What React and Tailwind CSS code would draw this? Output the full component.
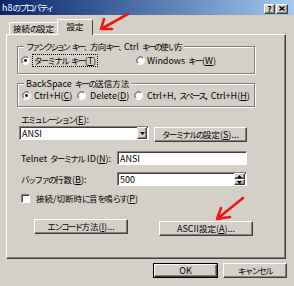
import React from 'react';

const raised = 'border border-t-white border-l-white border-r-[#404040] border-b-[#404040] shadow-[inset_-1px_-1px_0_#808080]';
const sunken = 'border border-t-[#808080] border-l-[#808080] border-r-white border-b-white shadow-[inset_1px_1px_0_#404040]';

// MS UI Gothic draws kana narrow; tighten kana / kanji runs to match
const J = ({ children, tight }) => {
  const parts = String(children).split(/([ァィゥェォャュョッ、]|[\u3000-\u30ff]+|[\u4e00-\u9fff]+)/).filter(Boolean);
  return parts.map((p, i) => {
    if (/^[ァィゥェォャュョッ、]$/.test(p)) return <span key={i} className="text-[8.5px] tracking-[-3.5px]">{p}</span>;
    if (/[\u3000-\u30ff]/.test(p)) return <span key={i} className={`text-[8.5px] ${tight ? 'tracking-[-2.4px]' : 'tracking-[-1.7px]'}`}>{p}</span>;
    if (/[\u4e00-\u9fff]/.test(p)) return <span key={i} className={`text-[8.5px] ${tight ? 'tracking-[-0.6px]' : ''}`}>{p}</span>;
    return p;
  });
};

const Radio = ({ checked }) => (
  <svg width="9" height="9" viewBox="0 0 12 12" className="shrink-0">
    <circle cx="6" cy="6" r="5.5" fill="#fff" />
    <path d="M2.1 9.9 A5.5 5.5 0 0 1 9.9 2.1" stroke="#808080" strokeWidth="1" fill="none" />
    <path d="M2.8 9.2 A4.5 4.5 0 0 1 9.2 2.8" stroke="#404040" strokeWidth="1" fill="none" />
    <path d="M9.9 2.1 A5.5 5.5 0 0 1 2.1 9.9" stroke="#fff" strokeWidth="1" fill="none" />
    {checked && <circle cx="6" cy="6" r="1.9" fill="#000" />}
  </svg>
);

const Key = ({ k }) => (
  <>(<span className="underline">{k}</span>)</>
);

const Button = ({ children, className = '' }) => (
  <div className={`${raised} bg-[#d4d0c8] flex items-center justify-center ${className}`}>
    {children}
  </div>
);

const Group = ({ label, className = '', children }) => (
  <div className={`relative border border-[#808080] shadow-[inset_1px_1px_0_#fff,1px_1px_0_#fff] ${className}`}>
    <span className="absolute -top-[6px] left-[6px] px-[2px] bg-[#d4d0c8] leading-[11px]">{label}</span>
    {children}
  </div>
);

const Arrow = ({ d }) => (
  <svg className="absolute top-0 left-0 pointer-events-none" width="294" height="286" viewBox="0 0 294 286">
    <path d={d} stroke="#f01414" strokeWidth="2.6" strokeLinecap="round" strokeLinejoin="round" fill="none" />
  </svg>
);

export default function App() {
  return (
    <div className="w-[294px] h-[286px] bg-[#d4d0c8] relative overflow-hidden whitespace-nowrap text-black text-[9px] leading-none [word-spacing:1px] font-['Noto_Sans_CJK_JP','Noto_Sans',sans-serif]">
      {/* Title bar */}
      <div className="h-[15px] bg-gradient-to-r from-[#0a246a] to-[#a6caf0] flex items-center justify-between pl-[2px] pr-[6px]">
        <span className="text-white text-[9px]"><J>h8のプロパティ</J></span>
        <div className="flex gap-[1px] mt-[2px]">
          <Button className="w-[11px] h-[10px] text-[8px] font-bold">?</Button>
          <Button className="w-[12px] h-[10px]">
            <svg width="6" height="5" viewBox="0 0 6 5">
              <path d="M0.5 0.5 L5.5 4.5 M5.5 0.5 L0.5 4.5" stroke="#000" strokeWidth="1.4" />
            </svg>
          </Button>
        </div>
      </div>

      {/* Tabs + panel */}
      <div className="ml-[6px] w-[280px] pt-[4px]">
        <div className="flex items-end h-[15px] pl-[3px]">
          <div className="w-[49px] h-[12px] border border-b-0 border-t-white border-l-white border-r-[#404040] rounded-t-[2px] flex items-center justify-center">
            <J>接続の設定</J>
          </div>
          <div className="relative z-10 -ml-[1px] -mb-[1px] w-[36px] h-[16px] bg-[#d4d0c8] border border-b-0 border-t-white border-l-white border-r-[#404040] rounded-t-[2px] flex items-center justify-center pb-[2px]">
            <J>設定</J>
          </div>
        </div>

        <div className={`${raised} h-[225px] pl-[10px] pt-[11px]`}>
          <Group label={<J tight>ファンクション キー、方向キー、Ctrl キーの使い方</J>} className="w-[238px] h-[28px] flex items-center pl-[3px]">
            <div className="flex items-center w-[115px]">
              <Radio checked />
              <span className="ml-[2px] px-[1px] py-[1px] border border-dotted border-black"><J>ターミナル キー</J><Key k="T" /></span>
            </div>
            <div className="flex items-center">
              <Radio />
              <span className="ml-[2px]"><J>Windows キー</J><Key k="W" /></span>
            </div>
          </Group>

          <Group label={<J>BackSpace キーの送信方法</J>} className="mt-[9px] w-[238px] h-[24px] flex items-center pl-[4px]">
            <div className="flex items-center w-[55px]">
              <Radio checked />
              <span className="ml-[3px]">Ctrl+H<Key k="C" /></span>
            </div>
            <div className="flex items-center w-[57px]">
              <Radio />
              <span className="ml-[4px]">Delete<Key k="D" /></span>
            </div>
            <div className="flex items-center">
              <Radio />
              <span className="ml-[4px]"><J>Ctrl+H, スペース, Ctrl+H</J><Key k="H" /></span>
            </div>
          </Group>

          <div className="mt-[7px] pl-[4px] h-[11px] leading-[11px]"><J>エミュレーション</J><Key k="E" />:</div>

          <div className="flex items-start mt-[1px] pl-[2px]">
            <div className={`${sunken} bg-white w-[130px] h-[14px] flex items-center justify-between`}>
              <span className="pl-[2px]">ANSI</span>
              <Button className="w-[10px] h-[12px] mr-[1px]">
                <svg width="5" height="3" viewBox="0 0 5 3"><path d="M0 0 H5 L2.5 3 Z" fill="#000" /></svg>
              </Button>
            </div>
            <Button className="ml-[5px] mt-[1px] w-[93px] h-[15px]"><J>ターミナルの設定</J><Key k="S" />...</Button>
          </div>

          <div className="flex items-center mt-[9px] pl-[4px]">
            <span className="w-[96px]"><J>Telnet ターミナル ID</J><Key k="N" />:</span>
            <div className={`${sunken} bg-white w-[130px] h-[14px] flex items-center pl-[2px]`}>ANSI</div>
          </div>

          <div className="flex items-center mt-[7px] pl-[4px]">
            <span className="w-[96px]"><J>バッファの行数</J><Key k="B" />:</span>
            <div className={`${sunken} bg-white w-[130px] h-[14px] flex items-center justify-between pl-[2px]`}>
              <span>500</span>
              <div className="flex flex-col mr-[1px]">
                <Button className="w-[11px] h-[6px]">
                  <svg width="5" height="3" viewBox="0 0 5 3"><path d="M0 3 H5 L2.5 0 Z" fill="#000" /></svg>
                </Button>
                <Button className="w-[11px] h-[6px]">
                  <svg width="5" height="3" viewBox="0 0 5 3"><path d="M0 0 H5 L2.5 3 Z" fill="#000" /></svg>
                </Button>
              </div>
            </div>
          </div>

          <div className="flex items-center mt-[8px] pl-[4px]">
            <div className={`${sunken} bg-white w-[9px] h-[9px]`} />
            <span className="ml-[6px]"><J>接続/切断時に音を鳴らす</J><Key k="P" /></span>
          </div>

          <div className="flex items-start mt-[16px] pl-[17px]">
            <Button className="w-[94px] h-[15px]"><J>エンコード方法</J><Key k="I" />...</Button>
            <Button className="ml-[31px] mt-[2px] w-[94px] h-[15px]"><J>ASCII 設定</J><Key k="A" />...</Button>
          </div>
        </div>
      </div>

      {/* Dialog buttons */}
      <div className="flex justify-end gap-[5px] pr-[7px] mt-[4px]">
        <div className="border border-black w-[65px] h-[15px] flex">
          <Button className="flex-1">OK</Button>
        </div>
        <Button className="w-[64px] h-[15px]"><J>キャンセル</J></Button>
      </div>

      <Arrow d="M128 14 L101 29 M101 29 L104 19 M101 29 L112 29" />
      <Arrow d="M243 198 L217 219 M217 219 L221 208 M217 219 L230 217" />
    </div>
  );
}
